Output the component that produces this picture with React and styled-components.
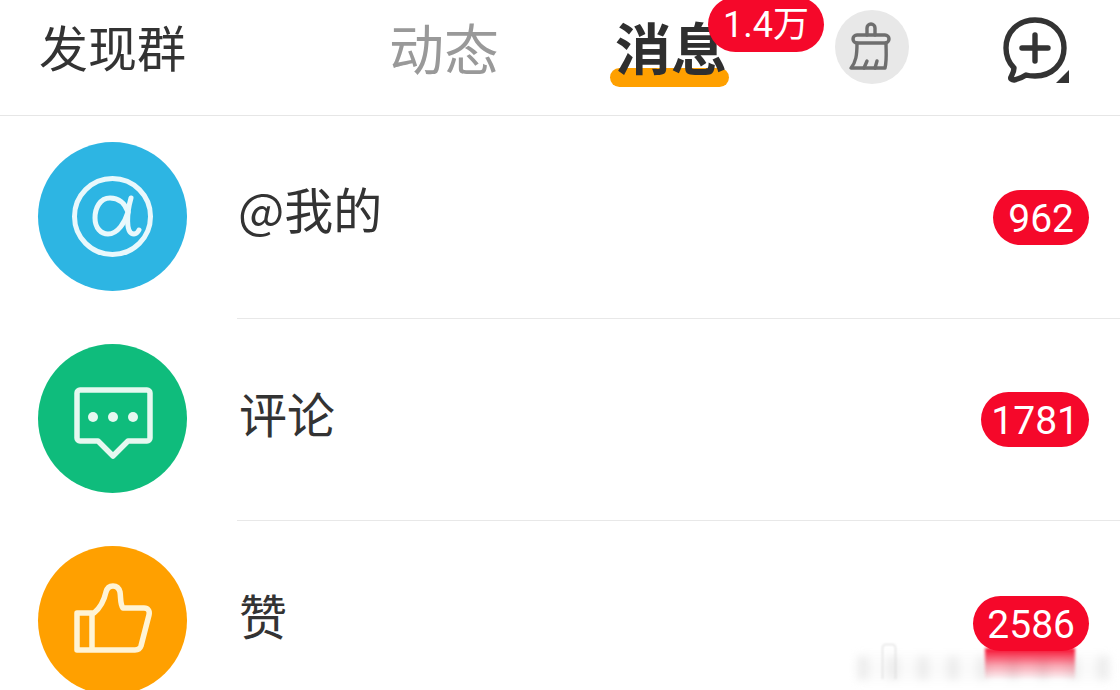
import styled, { createGlobalStyle } from 'styled-components';

const GlobalStyle = createGlobalStyle`
  html, body {
    margin: 0;
    background: #fff;
    overflow: hidden;
  }
`;

const Page = styled.div`
  position: relative;
  width: 1120px;
  height: 690px;
  overflow: hidden;
  background: #fff;
  font-family: "Noto Sans CJK SC", "Noto Sans", sans-serif;
  color: #333;
`;

const Header = styled.div`
  display: flex;
  align-items: center;
  height: 116px;
  padding: 0 0 23px 39px;
  box-sizing: border-box;
  border-bottom: 1px solid #e6e6e6;
`;

const Title = styled.div`
  width: 350px;
  font-size: 49px;
  line-height: 60px;
  color: #333;
`;

const Tab = styled.div`
  position: relative;
  width: ${(p) => p.$width}px;
  font-size: ${(p) => (p.$active ? 56 : 55)}px;
  line-height: 66px;
  font-weight: ${(p) => (p.$active ? 700 : 400)};
  color: ${(p) => (p.$active ? '#2f2f2f' : '#999')};
`;

const TabLabel = styled.span`
  position: relative;
  z-index: 1;
`;

const Underline = styled.div`
  position: absolute;
  left: -5px;
  top: 55px;
  width: 119px;
  height: 19px;
  border-radius: 10px;
  background: #ffa000;
`;

const HeaderBadge = styled.div`
  position: absolute;
  left: 93px;
  top: -16px;
  z-index: 2;
  display: flex;
  align-items: center;
  justify-content: center;
  width: 116px;
  height: 55px;
  border-radius: 28px;
  background: #f5082a;
  color: #fff;
  font-family: Roboto, "Noto Sans CJK SC", sans-serif;
  font-size: 36px;
  font-weight: 400;
  line-height: 1;
`;

const SweepButton = styled.div`
  display: flex;
  width: 74px;
  height: 74px;
  margin-top: 2px;
  border-radius: 50%;
  background: #e8e8e8;
`;

const ComposeButton = styled.div`
  display: flex;
  width: 70px;
  height: 70px;
  margin: 12px 0 0 94px;
`;

const Row = styled.div`
  display: flex;
  align-items: flex-start;
  height: 202px;
  padding: 26px 31px 0 38px;
  box-sizing: border-box;
  position: relative;
  & + &::before {
    content: "";
    position: absolute;
    left: 237px;
    right: 0;
    top: 0;
    height: 1px;
    background: #e8e8e8;
  }
`;

const Avatar = styled.div`
  flex: none;
  display: flex;
  width: 149px;
  height: 149px;
  border-radius: 50%;
  background: ${(p) => p.$color};
`;

const RowLabel = styled.div`
  flex: 1;
  margin: ${(p) => p.$offset}px 0 0 ${(p) => p.$indent}px;
  font-size: ${(p) => p.$size}px;
  line-height: 60px;
  color: #333;
`;

const CountBadge = styled.div`
  display: flex;
  align-items: center;
  justify-content: center;
  height: 55px;
  margin-top: ${(p) => p.$offset}px;
  padding: 3px ${(p) => p.$pad}px 0;
  box-sizing: border-box;
  border-radius: 28px;
  background: #f5082a;
  color: #fff;
  font-family: Roboto, sans-serif;
  font-size: 39px;
  line-height: 1;
  position: relative;
  z-index: 2;
`;

const Watermark = styled.div`
  position: absolute;
  left: 857px;
  top: 656px;
  width: 254px;
  height: 24px;
  background: repeating-linear-gradient(90deg, #e2e2e2 0 12px, #f8f8f8 12px 30px);
  filter: blur(4px);
  opacity: 0.6;
`;

const WatermarkMark = styled.div`
  position: absolute;
  left: 882px;
  top: 644px;
  width: 12px;
  height: 34px;
  border: 1px solid #d8d8d8;
  border-bottom: none;
  border-radius: 4px 4px 0 0;
  filter: blur(1px);
`;

const WatermarkSmear = styled.div`
  position: absolute;
  left: 985px;
  top: 648px;
  width: 90px;
  height: 32px;
  background: linear-gradient(180deg, #f5082a 0%, rgba(245, 8, 42, 0.35) 55%, rgba(245, 8, 42, 0) 100%);
  filter: blur(1.5px);
  z-index: 1;
`;

const BrushIcon = () => (
  <svg width="74" height="74" viewBox="0 0 74 74" fill="none" stroke="#6e6e6e" strokeWidth="3.4" strokeLinecap="round" strokeLinejoin="round">
    <path d="M32 25V18a4 4 0 0 1 8 0V25" />
    <rect x="18" y="25" width="36" height="8" rx="4" />
    <path d="M22 33C22 45 21 52 16 58H50C52 50 51 41 51 33" />
    <path d="M29 58l3-7M40 58l2-7" />
  </svg>
);

const ComposeIcon = () => (
  <svg width="70" height="70" viewBox="0 0 70 70" fill="none" stroke="#333" strokeWidth="5.4" strokeLinecap="round" strokeLinejoin="round">
    <path d="M32 3C15 3 3 15 3 31C3 39 6 46 11 51C11 55 9 58 8 60C7 62 9 63 11 63C16 62 20 60 23 58C26 59 29 59 32 59C49 59 61 47 61 31C61 15 49 3 32 3Z" />
    <path d="M32 18V44M19 31H45" />
    <path d="M66 53V66H53Z" fill="#333" stroke="none" />
  </svg>
);

const AtIcon = () => (
  <svg width="149" height="149" viewBox="0 0 149 149" fill="none" stroke="#e9f8fc" strokeWidth="5" strokeLinecap="round">
    <circle cx="74.5" cy="74.5" r="38" />
    <path d="M90 70C86 59 79 56 72 56C62 56 57 66 57 76C57 86 63 92 70 92C80 92 87 80 90 70" />
    <path d="M93 56C89 70 87 92 96 92C98 92 100 90 101 88" />
  </svg>
);

const CommentIcon = () => (
  <svg width="149" height="149" viewBox="0 0 149 149" fill="none" stroke="#e6f8f0" strokeWidth="5.5" strokeLinejoin="round">
    <path d="M42 46H109A3 3 0 0 1 112 49V94A3 3 0 0 1 109 97H90L75 112L60 97H42A3 3 0 0 1 39 94V49A3 3 0 0 1 42 46Z" />
    <circle cx="55" cy="73" r="5" fill="#e6f8f0" stroke="none" />
    <circle cx="75" cy="73" r="5" fill="#e6f8f0" stroke="none" />
    <circle cx="95" cy="73" r="5" fill="#e6f8f0" stroke="none" />
  </svg>
);

const ThumbIcon = () => (
  <svg width="149" height="149" viewBox="0 0 149 149" fill="none" stroke="#fff4d6" strokeWidth="5.5" strokeLinejoin="round">
    <path d="M39 67H56C62 62 66 55 68 46C70 38 80 38 82 46C83 52 82 58 85 62H106C110 62 112 65 111 69L103 100C102 103 100 104 97 104H39Z" />
    <path d="M54 67V104" />
  </svg>
);

const rows = [
  { label: '@我的', color: '#2db5e3', icon: <AtIcon />, count: 962, pad: 15, labelTop: 36, indent: 51, size: 49, badgeTop: 48 },
  { label: '评论', color: '#0fbc7c', icon: <CommentIcon />, count: 1781, pad: 10, labelTop: 38, indent: 52, size: 48, badgeTop: 48 },
  { label: '赞', color: '#ffa000', icon: <ThumbIcon />, count: 2586, pad: 14, labelTop: 38, indent: 52, size: 48, badgeTop: 50 },
];

export default function App() {
  return (
    <Page>
      <GlobalStyle />
      <Header>
        <Title>发现群</Title>
        <Tab $width={226}>
          <TabLabel>动态</TabLabel>
        </Tab>
        <Tab $width={220} $active>
          <Underline />
          <TabLabel>消息</TabLabel>
          <HeaderBadge>1.4万</HeaderBadge>
        </Tab>
        <SweepButton>
          <BrushIcon />
        </SweepButton>
        <ComposeButton>
          <ComposeIcon />
        </ComposeButton>
      </Header>
      {rows.map((row) => (
        <Row key={row.label}>
          <Avatar $color={row.color}>{row.icon}</Avatar>
          <RowLabel $offset={row.labelTop} $indent={row.indent} $size={row.size}>{row.label}</RowLabel>
          <CountBadge $offset={row.badgeTop} $pad={row.pad}>{row.count}</CountBadge>
        </Row>
      ))}
      <Watermark />
      <WatermarkMark />
      <WatermarkSmear />
    </Page>
  );
}
